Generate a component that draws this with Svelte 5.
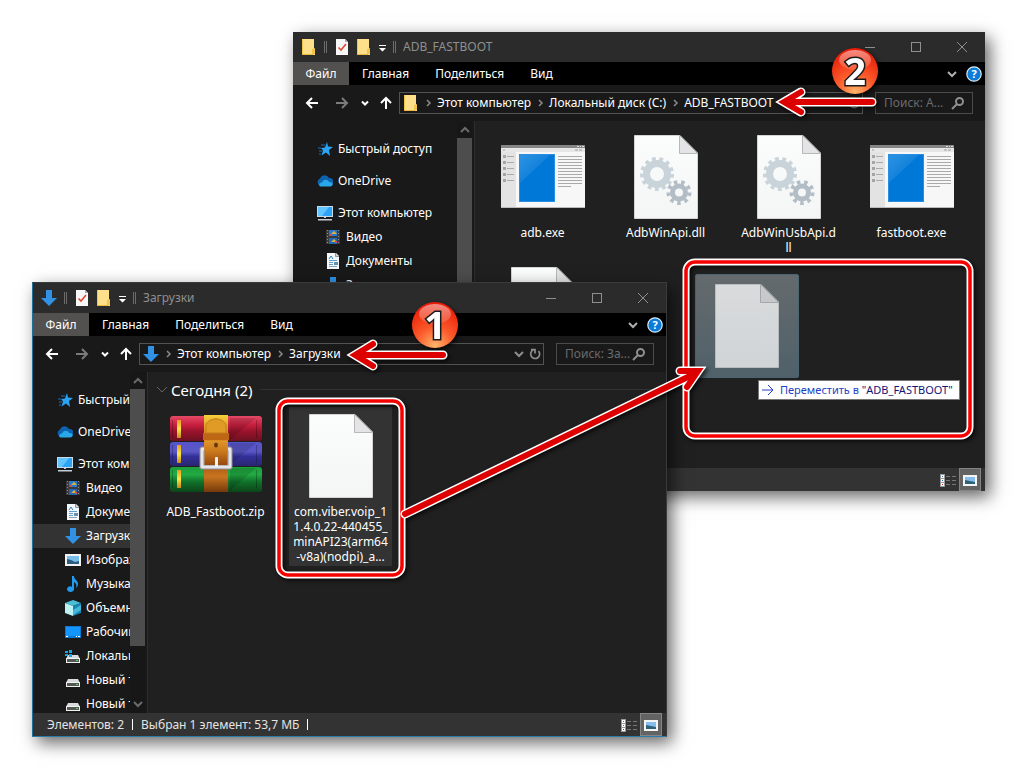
<script>
  const target = {
    id: 'target',
    title: 'ADB_FASTBOOT',
    icon: 'folder',
    path: ['Этот компьютер', 'Локальный диск (C:)', 'ADB_FASTBOOT'],
    search: 'Поиск: A...',
    places: [
      { icon: 'star', name: 'Быстрый доступ', root: true, spaced: true },
      { icon: 'cloud', name: 'OneDrive', root: true, spaced: true },
      { icon: 'pc', name: 'Этот компьютер', root: true },
      { icon: 'video', name: 'Видео' },
      { icon: 'docs', name: 'Документы' },
      { icon: 'down', name: 'Загрузки' }
    ],
    files: [
      { icon: 'exe', name: 'adb.exe' },
      { icon: 'dll', name: 'AdbWinApi.dll' },
      { icon: 'dll', name: 'AdbWinUsbApi.d\nll' },
      { icon: 'exe', name: 'fastboot.exe' },
      { icon: 'file', name: '' }
    ]
  };

  const source = {
    id: 'source',
    title: 'Загрузки',
    icon: 'down',
    path: ['Этот компьютер', 'Загрузки'],
    search: 'Поиск: За...',
    group: 'Сегодня (2)',
    places: [
      { icon: 'star', name: 'Быстрый доступ', root: true, spaced: true },
      { icon: 'cloud', name: 'OneDrive', root: true, spaced: true },
      { icon: 'pc', name: 'Этот компьютер', root: true },
      { icon: 'video', name: 'Видео' },
      { icon: 'docs', name: 'Документы' },
      { icon: 'down', name: 'Загрузки', current: true },
      { icon: 'image', name: 'Изображения' },
      { icon: 'music', name: 'Музыка' },
      { icon: 'cube', name: 'Объемные объекты' },
      { icon: 'desktop', name: 'Рабочий стол' },
      { icon: 'sysdisk', name: 'Локальный диск (C:)' },
      { icon: 'disk', name: 'Новый том (D:)' },
      { icon: 'disk', name: 'Новый том (E:)' }
    ],
    files: [
      { icon: 'zip', name: 'ADB_Fastboot.zip' },
      { icon: 'file', name: 'com.viber.voip_1\n1.4.0.22-440455_\nminAPI23(arm64\n-v8a)(nodpi)_a...', selected: true }
    ],
    status: ['Элементов: 2', 'Выбран 1 элемент: 53,7 МБ']
  };

  const windows = [target, source];
  const menu = ['Файл', 'Главная', 'Поделиться', 'Вид'];
</script>

{#snippet icon(name)}
  <svg class="icon" width="16" height="16" viewBox="0 0 16 16" aria-hidden="true">
    {#if name === 'folder'}
      <path d="M1 0h12v11l1 1v4H1z" fill="#ffe08a" />
      <path d="M1 0h1v16h-1zM11 10l3-1v6l-3 1z" fill="#f0c54c" />
      <path d="M1 15h11v1H1z" fill="#e8b93c" />
    {:else if name === 'check'}
      <path d="M2 0h9l3 3v13H2z" fill="#f7f7f7" />
      <path d="M11 0l3 3h-3z" fill="#aaa" />
      <path d="M4.500 8.500l2.500 2.500 5-6" fill="none" stroke="#e2492f" stroke-width="1.600" />
    {:else if name === 'down'}
      <path d="M5 0h6v8h5l-8 8-8-8h5z" fill="#3191e4" />
    {:else if name === 'star'}
      <path d="M10 1l1 4.500 5 .500-4 3 1 6-4-3.500-4.500 3 1.500-5-2-2.500 4-.500z" fill="#2aa5f5" />
      <path d="M4 4h4M1 7h3M2 10h3M2 13h2" stroke="#1670b8" />
    {:else if name === 'cloud'}
      <path d="M4 13a4 4 0 0 1-1-7.600A5 5 0 0 1 12 5a4 4 0 0 1 1 8z" fill="#0f62ae" />
      <path d="M4 13.500c-3 0-2-4 1-4 2-4 6-3 7-.500 4-1 5 4.500 1 4.500z" fill="#28a8ea" />
    {:else if name === 'pc'}
      <rect y="1" width="16" height="11" fill="#c8dbe6" />
      <rect x="1" y="2" width="14" height="9" fill="#2ca3f4" />
      <path d="M1 2h11L5 11H1z" fill="#62c4ff" />
      <path d="M7 12h2v1H7zM1 14h14v1.500H1z" fill="#c5cdd8" />
    {:else if name === 'video'}
      <rect x="1" y="1" width="14" height="14" fill="#3a3a3a" />
      <path d="M2.500 1v14M13.500 1v14" stroke="#909090" stroke-dasharray="1 2" />
      <rect x="4" y="1" width="8" height="6" fill="#2879ce" />
      <rect x="4" y="9" width="8" height="6" fill="#2667b5" />
      <path d="M6 5l3-3 3 3zM6 13l3-3 3 3z" fill="#e0b335" />
      <path d="M5 5h2v2H5zM10 12h2v2h-2z" fill="#cf4b62" />
    {:else if name === 'docs'}
      <path d="M2 0h9l3 3v13H2z" fill="#f4f7f9" />
      <path d="M10.500 0v3.500H14" fill="#ccd4d9" stroke="#8b969e" />
      <path d="M4 6l2-3 2 3" fill="none" stroke="#2a7ec0" />
      <path d="M4 7.500h8M4 9.500h4M4 11.500h4" stroke="#5ba0d2" />
      <path d="M4 13.500h8" stroke="#8fa3b0" />
      <path d="M9 9h4v3H9z" fill="#6a91ab" />
    {:else if name === 'image'}
      <rect y="2" width="16" height="12" fill="#f2f2f2" />
      <rect x="2" y="4" width="12" height="8" fill="#79bdea" />
      <path d="M2 7l4 1 4 2 4-1v3H2z" fill="#285c80" />
    {:else if name === 'music'}
      <path d="M7 0h2c0 4 4 4 4 8 0 2-1 3-2 4 1-3 0-5-2-6v7c0 4-7 4-7 0 0-2 3-4 5-2z" fill="#1f9bf0" />
    {:else if name === 'cube'}
      <path d="M0 3l8-3 8 3-8 3z" fill="#48bed8" />
      <path d="M0 3l8 3v10l-8-3z" fill="#bdf1f2" />
      <path d="M16 3L8 6v10l8-3z" fill="#1686b4" />
      <path d="M8 10l8-5v5l-8 5z" fill="#45b9d7" />
    {:else if name === 'desktop'}
      <rect y="2" width="16" height="12" fill="#0d78d0" />
      <rect x="1" y="3" width="14" height="9" fill="#1595ff" />
      <path d="M1 12.500h2M11 12.500h1M13 12.500h2" stroke="#fff" />
    {:else if name === 'sysdisk' || name === 'disk'}
      <path d="M3 7h10l2 4H1z" fill="#d9dcdc" />
      <rect x="1" y="10" width="14" height="5" fill="#f0f0f0" />
      <rect x="2" y="11" width="12" height="3" fill="#565656" />
      <rect x="11" y="12" width="2" height="1" fill="#3be545" />
      {#if name === 'sysdisk'}
        <path d="M0 3h3v2H0zM4 2h3v3H4zM0 6h3v2H0zM4 6h3v3H4z" fill="#16a5ed" />
      {/if}
    {:else if name === 'back'}
      <path d="M14 8H3M8 3L3 8l5 5" fill="none" stroke="currentColor" stroke-width="2" />
    {:else if name === 'forward'}
      <path d="M2 8h11M8 3l5 5-5 5" fill="none" stroke="currentColor" stroke-width="2" />
    {:else if name === 'up'}
      <path d="M8 14V3M3 8l5-5 5 5" fill="none" stroke="currentColor" stroke-width="2" />
    {:else if name === 'chevron'}
      <path d="M4 6l4 4 4-4" fill="none" stroke="currentColor" stroke-width="2" />
    {:else if name === 'small-chevron'}
      <path d="M5 6.500L8 9.500l3-3" fill="none" stroke="currentColor" stroke-width="2" />
    {:else if name === 'right'}
      <path d="M8 5l3 3-3 3" fill="none" stroke="currentColor" stroke-width="1.500" />
    {:else if name === 'refresh'}
      <path d="M11.500 5a4.500 4.500 0 1 1-5-1.200M4 3.500h4v4" fill="none" stroke="currentColor" stroke-width="1.700" />
    {:else if name === 'search'}
      <circle cx="9.500" cy="6.500" r="3.500" fill="none" stroke="currentColor" stroke-width="2" />
      <path d="M7 9l-5 5" stroke="currentColor" stroke-width="2" />
    {:else if name === 'caret'}
      <path d="M5 6h7v1H5zM5 9h7l-3.500 3.500z" fill="#fff" />
    {:else if name === 'minimize'}
      <path d="M3 8.500h10" stroke="currentColor" />
    {:else if name === 'maximize'}
      <rect x="3.500" y="3.500" width="9" height="9" fill="none" stroke="currentColor" />
    {:else if name === 'close'}
      <path d="M3 3l10 10M13 3L3 13" stroke="currentColor" />
    {:else if name === 'help'}
      <circle cx="8" cy="8" r="7.200" fill="#0b7bd8" stroke="#dcecf8" stroke-width="1.200" />
      <text x="8" y="12" text-anchor="middle" font-size="11" font-weight="700" fill="#fff">?</text>
    {:else if name === 'details'}
      <rect y="2" width="5" height="13" fill="#9a9a9a" />
      <path d="M1 3h3v3H1zM1 7h3v3H1zM1 11h3v3H1z" fill="#fff" />
      <path d="M2 4h1v1H2zM2 8h1v1H2z" fill="#2877c0" />
      <path d="M2 12h1v1H2z" fill="#c02b2b" />
      <path d="M6 4.500h4M6 8.500h4M6 12.500h4M12 4.500h4M12 8.500h4M12 12.500h4" stroke="#777" />
    {:else if name === 'large'}
      <rect x="1" y="3" width="14" height="11" fill="#f4f4f4" />
      <rect x="3" y="5" width="10" height="7" fill="#86bdec" />
      <path d="M3 8l5 1 5 1v2H3z" fill="#2f6278" />
    {/if}
  </svg>
{/snippet}

{#snippet page(gears)}
  <svg width="64" height="84" viewBox="0 0 64 84" aria-hidden="true">
    <path d="M.5.5H46L63.500 18v65.500H.5z" fill="url(#paper)" stroke="#d4d4d4" />
    <path d="M45.500.5V18.500H63.500z" fill="#e4e4e6" stroke="#b8b8b8" />
    {#if gears}
      <g fill="none">
        <circle cx="23" cy="39" r="10.500" stroke="#c9d3da" stroke-width="7" />
        <circle cx="23" cy="39" r="15" stroke="#c9d3da" stroke-width="4" stroke-dasharray="3.700 3.554" />
        <circle cx="45" cy="57.500" r="6.500" stroke="#b2bdc5" stroke-width="5" />
        <circle cx="45" cy="57.500" r="10.500" stroke="#b2bdc5" stroke-width="4" stroke-dasharray="3.500 3.830" />
      </g>
    {/if}
  </svg>
{/snippet}

{#snippet program()}
  <svg width="84" height="64" viewBox="0 0 84 64" aria-hidden="true">
    <rect width="84" height="63" fill="#f7f7f7" />
    <rect width="84" height="3" fill="#858585" />
    <path d="M76 1h2v1h-2zM79 1h1v1h-1zM81 1h2v1h-2z" fill="#ddd" />
    <rect y="3" width="84" height="4" fill="#e6e6e6" />
    <path d="M2 4h2v2H2zM74 4h3v2h-3zM78 4h3v2h-3z" fill="#c2c2c2" />
    <rect y="7" width="15" height="55" fill="#e3e3e3" />
    {#each [10, 16, 22, 28, 34] as y}
      <rect x="2" {y} width="3" height="3" fill="#a5a5a5" />
      <rect x="6" y={y + 1} width="7" height="1" fill="#aaa" />
    {/each}
    <rect x="18" y="9" width="36" height="48" fill="#2a8ee2" />
    <rect x="19" y="10" width="34" height="46" fill="#0078d7" />
    <path d="M19 10h30L19 38z" fill="url(#screen)" />
    {#each [11, 14, 17, 20, 23, 26, 29, 32, 35, 38] as y}
      <rect x="57" {y} width="24" height="1" fill="#a9a9a9" />
    {/each}
    <rect x="57" y="41" width="13" height="1" fill="#a9a9a9" />
    <path d="M0 62h84v1H0z" fill="#bbb" />
  </svg>
{/snippet}

{#snippet archive()}
  <svg width="92" height="84" viewBox="0 -1 92 84" aria-hidden="true">
    <rect y="1" width="92" height="25" rx="3" fill="url(#red-book)" />
    <rect y="27" width="92" height="24" rx="3" fill="url(#blue-book)" />
    <rect y="52" width="92" height="25" rx="3" fill="url(#green-book)" />
    {#each [5, 30, 55] as y}
      <rect x="7" {y} width="4" height="18" fill="url(#gold)" />
      <path d="M86.500 {y}v18M2.500 {y}v18" stroke="#000" opacity=".25" />
    {/each}
    <path d="M60 3h26L60 25zM60 28h26L60 50zM60 53h26L60 76z" fill="#000" opacity=".12" />
    <rect x="34" width="24" height="77" fill="url(#belt)" />
    <path d="M33 18h26v7H33z" fill="#bd6716" />
    <path d="M36 9c5-7 15-7 20 0v9H36z" fill="#e09a26" stroke="#c37f1d" />
    <path d="M34 34h-2v18h28V34h-2" fill="none" stroke="#8d8d96" stroke-width="5" stroke-linejoin="round" />
    <path d="M34 34h-2v18h28V34h-2" fill="none" stroke="#e6e6ea" stroke-width="3" stroke-linejoin="round" />
    <rect x="35" y="26" width="22" height="24" fill="url(#strap)" />
    <rect x="45" y="42" width="3" height="10" rx="1" fill="#f2f2f5" />
    <ellipse cx="46" cy="30" rx="2" ry="2.500" fill="#68370c" />
  </svg>
{/snippet}

{#snippet grip()}
  <svg class="grip" width="5" height="14" viewBox="0 0 5 14" aria-hidden="true">
    <path d="M1.500 1v12M3.500 1v12" stroke="#6c6c6c" />
  </svg>
{/snippet}

<svg class="defs" width="0" height="0" aria-hidden="true">
  <defs>
    <linearGradient id="paper" x2="0" y2="1"><stop stop-color="#fbfcfc" /><stop offset="1" stop-color="#f4f5f5" /></linearGradient>
    <linearGradient id="screen" x2=".6" y2=".6"><stop stop-color="#2d93e2" /><stop offset="1" stop-color="#0f7fda" /></linearGradient>
    <linearGradient id="red-book" x2="0" y2="1"><stop stop-color="#e44a66" /><stop offset=".35" stop-color="#c9203f" /><stop offset=".6" stop-color="#9b142c" /><stop offset="1" stop-color="#6d1020" /></linearGradient>
    <linearGradient id="blue-book" x2="0" y2="1"><stop stop-color="#5554ca" /><stop offset=".4" stop-color="#5a57c4" /><stop offset=".6" stop-color="#34309a" /><stop offset="1" stop-color="#292570" /></linearGradient>
    <linearGradient id="green-book" x2="0" y2="1"><stop stop-color="#1c9e3c" /><stop offset=".3" stop-color="#22aa43" /><stop offset=".6" stop-color="#107029" /><stop offset="1" stop-color="#0c451a" /></linearGradient>
    <linearGradient id="gold" x2="0" y2="1"><stop stop-color="#e59b28" /><stop offset=".5" stop-color="#fbe842" /><stop offset="1" stop-color="#c7861d" /></linearGradient>
    <linearGradient id="belt" x2="0" y2="1"><stop stop-color="#f5d13c" /><stop offset=".2" stop-color="#dc941f" /><stop offset=".45" stop-color="#d98521" /><stop offset=".7" stop-color="#b56218" /><stop offset=".8" stop-color="#c8741f" /><stop offset="1" stop-color="#75390b" /></linearGradient>
    <linearGradient id="strap" x2="0" y2="1"><stop stop-color="#e0952a" /><stop offset=".4" stop-color="#cd7b1d" /><stop offset="1" stop-color="#97490f" /></linearGradient>
    <radialGradient id="ball" cx=".5" cy=".95" r=".9"><stop stop-color="#ffb56b" /><stop offset=".45" stop-color="#fb5a2b" /><stop offset="1" stop-color="#e81c06" /></radialGradient>
    <linearGradient id="gloss" x2="0" y2="1"><stop stop-color="#fff" stop-opacity=".5" /><stop offset="1" stop-color="#fff" stop-opacity=".1" /></linearGradient>
  </defs>
</svg>

<main class="desktop">
  {#each windows as win}
    <section class="window {win.id}">
      <header class="titlebar">
        {@render icon(win.icon)}
        {@render grip()}
        {@render icon('check')}
        {@render icon('folder')}
        <span class="customize">{@render icon('caret')}</span>
        {@render grip()}
        <span class="title">{win.title}</span>
        <div class="controls">
          <button aria-label="Свернуть">{@render icon('minimize')}</button>
          <button aria-label="Развернуть">{@render icon('maximize')}</button>
          <button aria-label="Закрыть">{@render icon('close')}</button>
        </div>
      </header>

      <div class="menu">
        {#each menu as item, i}
          <button class:primary={i === 0}>{item}</button>
        {/each}
        <div class="menu-end">
          <button class="dim" aria-label="Лента">{@render icon('chevron')}</button>
          <button aria-label="Справка">{@render icon('help')}</button>
        </div>
      </div>

      <div class="navbar">
        <button class="step" aria-label="Назад">{@render icon('back')}</button>
        <button class="step muted" aria-label="Вперед">{@render icon('forward')}</button>
        <button class="recent" aria-label="Последние">{@render icon('small-chevron')}</button>
        <button class="parent" aria-label="Вверх">{@render icon('up')}</button>
        <div class="address">
          {@render icon(win.icon)}
          {#each win.path as part}
            <span class="sep">{@render icon('right')}</span>
            <a href="#{win.id}">{part}</a>
          {/each}
          <div class="address-end">
            <button aria-label="История">{@render icon('chevron')}</button>
            <button aria-label="Обновить">{@render icon('refresh')}</button>
          </div>
        </div>
        <label class="search">
          <input type="text" placeholder={win.search} aria-label="Поиск" />
          {@render icon('search')}
        </label>
      </div>

      <div class="body">
        <nav class="places">
          {#each win.places as place}
            <a href="#{win.id}" class:root={place.root} class:spaced={place.spaced} class:current={place.current}>
              {@render icon(place.icon)}
              <span>{place.name}</span>
            </a>
          {/each}
        </nav>
        <div class="scrollbar">
          <span class="arrow flip">{@render icon('chevron')}</span>
          <span class="thumb"></span>
          <span class="arrow">{@render icon('chevron')}</span>
        </div>
        <div class="content">
          {#if win.group}
            <h2>
              <svg width="12" height="12" viewBox="0 0 12 12" aria-hidden="true"><path d="M1 3l5 5 5-5" fill="none" stroke="#666" /></svg>
              {win.group}
            </h2>
          {/if}
          <div class="files">
            {#each win.files as file}
              <button class="file" class:selected={file.selected}>
                <span class="picture">
                  {#if file.icon === 'exe'}
                    {@render program()}
                  {:else if file.icon === 'zip'}
                    {@render archive()}
                  {:else}
                    {@render page(file.icon === 'dll')}
                  {/if}
                </span>
                <span class="name">{file.name}</span>
              </button>
            {/each}
          </div>
        </div>
      </div>

      <footer class="status">
        {#each win.status ?? [] as text}
          <span class="info">{text}</span>
        {/each}
        <div class="views">
          <button aria-label="Таблица">{@render icon('details')}</button>
          <button class="on" aria-label="Крупные значки">{@render icon('large')}</button>
        </div>
      </footer>
    </section>
  {/each}

  <div class="ghost">{@render page(false)}</div>
  <div class="tip">
    <svg width="14" height="14" viewBox="0 0 14 14" aria-hidden="true"><path d="M1 7h11M7 2l5 5-5 5" fill="none" stroke="#2340c8" /></svg>
    <span>Переместить в <b>"ADB_FASTBOOT"</b></span>
  </div>

  <svg class="marks" aria-hidden="true">
    <g fill="none">
      {#each [[279, 401, 123, 174], [686, 262, 284, 174]] as [x, y, width, height]}
        <rect {x} {y} {width} {height} rx="9" stroke="#fff" stroke-width="7" />
        <rect {x} {y} {width} {height} rx="9" stroke="#f60000" stroke-width="3.500" />
      {/each}
      {#each ['M872 102H788M801 92L784 102L801 112', 'M443 355H359M373 344L355 355L373 366', 'M405 514L692 375M680 371L698 371L687 387'] as d}
        <path {d} stroke="#fff" stroke-width="9" stroke-linecap="round" />
        <path {d} stroke="#dc0000" stroke-width="6" stroke-linecap="round" />
      {/each}
    </g>
    {#each [[435, 325, 1], [855, 71, 2]] as [x, y, n]}
      <circle cx={x} cy={y} r="23" fill="url(#ball)" />
      <ellipse cx={x} cy={y - 11} rx="16" ry="10" fill="url(#gloss)" />
      <text {x} y={y + 14} text-anchor="middle">{n}</text>
    {/each}
  </svg>
</main>

<style>
  :global(body) {
    margin: 0;
    background: #fff;
  }
  .desktop {
    position: relative;
    min-height: 100vh;
    overflow: hidden;
    color: #fff;
    font: 12px/16px "Noto Sans", "Open Sans", sans-serif;
  }
  .defs { position: absolute; }
  svg { display: block; flex: none; }
  button {
    padding: 0;
    border: 0;
    background: none;
    color: inherit;
    font: inherit;
  }
  a { color: inherit; text-decoration: none; }

  .window {
    position: absolute;
    box-sizing: border-box;
    display: flex;
    flex-direction: column;
    background: #191919;
    box-shadow: 5px 6px 16px rgba(0, 0, 0, 0.6);
  }
  .target {
    left: 293px;
    top: 32px;
    width: 692px;
    height: 459px;
  }
  .source {
    left: 32px;
    top: 282px;
    width: 635px;
    height: 455px;
    border: 1px solid #3b3b3b;
    border-left-color: #216f96;
    border-bottom-color: #2a7ba8;
  }

  .titlebar {
    display: flex;
    align-items: center;
    gap: 6px;
    height: 30px;
    padding-left: 8px;
    background: #2b2b2b;
    color: #8f8f8f;
  }
  .customize { width: 8px; }
  .customize .icon { margin-left: -4px; }
  .title { flex: 1; }
  .controls { display: flex; }
  .controls button {
    display: grid;
    place-items: center;
    width: 46px;
    height: 30px;
  }

  .menu {
    display: flex;
    height: 23px;
    background: #000;
  }
  .menu > button { padding: 0 13px; }
  .menu > .primary { width: 56px; padding: 0; background: #535150; }
  .menu-end {
    display: flex;
    align-items: center;
    gap: 6px;
    margin-left: auto;
    padding-right: 3px;
  }
  .dim { color: #b0b0b0; }

  .navbar {
    display: flex;
    align-items: center;
    height: 36px;
    padding: 0 12px 0 4px;
  }
  .navbar > button { display: grid; place-items: center; }
  .step { width: 30px; }
  .muted { color: #7b7b7b; }
  .recent { width: 16px; }
  .parent { width: 26px; }
  .address {
    display: flex;
    flex: 1;
    align-items: center;
    box-sizing: border-box;
    height: 22px;
    padding-left: 3px;
    border: 1px solid #535353;
  }
  .sep {
    width: 18px;
    color: #8a8a8a;
  }
  .address-end {
    display: flex;
    align-items: center;
    margin-left: auto;
    color: #8f8f8f;
  }
  .search {
    display: flex;
    align-items: center;
    box-sizing: border-box;
    width: 98px;
    height: 22px;
    margin-left: 12px;
    padding: 0 6px 0 8px;
    border: 1px solid #4b4b4b;
    color: #8f8f8f;
  }
  .search input {
    flex: 1;
    min-width: 0;
    padding: 0;
    border: 0;
    outline: 0;
    background: none;
    color: #fff;
    font: inherit;
  }
  .search input::placeholder { color: #6b6b6b; opacity: 1; }

  .body {
    display: flex;
    flex: 1;
    min-height: 0;
  }
  .places {
    width: 97px;
    padding-top: 16px;
    overflow: hidden;
  }
  .target .places { width: 164px; }
  .places a {
    display: flex;
    align-items: center;
    gap: 5px;
    height: 24px;
    padding-left: 32px;
    white-space: nowrap;
  }
  .places .root { padding-left: 24px; }
  .places .spaced { margin-bottom: 8px; }
  .places .current { background: #333; }
  .scrollbar {
    display: flex;
    flex-direction: column;
    width: 15px;
    margin-right: 2px;
    background: #171717;
    color: #6b6b6b;
  }
  .arrow { height: 17px; overflow: hidden; }
  .flip { transform: scaleY(-1); }
  .thumb { flex: 1; background: #4d4d4d; }
  .source .thumb { flex: none; height: 257px; }
  .source .arrow:last-child { margin-top: auto; }

  .content {
    flex: 1;
    min-width: 0;
    border-left: 1px solid #2d2d2d;
    background: #202020;
  }
  h2 {
    display: flex;
    align-items: center;
    gap: 3px;
    height: 35px;
    margin: 0;
    padding: 0 10px 0 8px;
    font-size: 15px;
    font-weight: 400;
  }
  h2::after {
    content: "";
    flex: 1;
    height: 1px;
    margin-left: 4px;
    background: #323232;
  }
  .files {
    display: grid;
    grid-template-columns: repeat(auto-fill, 103px);
    gap: 3px 20px;
    padding-left: 16px;
  }
  .target .files { padding-top: 7px; }
  .source .files { column-gap: 22px; }
  .file {
    display: flex;
    flex-direction: column;
    align-items: center;
    gap: 6px;
    padding: 7px 0 2px;
    line-height: 15px;
  }
  .file.selected { background: #333; }
  .picture {
    display: grid;
    place-items: center;
    height: 84px;
  }
  .name { white-space: pre; }
  .target .name { min-height: 30px; }

  .status {
    display: flex;
    align-items: center;
    height: 23px;
    padding: 0 4px 0 14px;
    background: #333;
  }
  .info {
    display: flex;
    align-items: center;
    margin-right: 8px;
    color: #e4e4e4;
  }
  .info::after {
    content: "";
    width: 1px;
    height: 11px;
    margin-left: 8px;
    background: #fff;
  }
  .views { display: flex; margin-left: auto; }
  .views button {
    display: grid;
    place-items: center;
    box-sizing: border-box;
    width: 22px;
    height: 23px;
  }
  .views .on { border: 1px solid #858585; background: #636363; }

  .ghost {
    position: absolute;
    left: 695px;
    top: 274px;
    display: grid;
    place-items: center;
    box-sizing: border-box;
    width: 104px;
    height: 104px;
    border: 1px solid #4c6470;
    border-radius: 2px;
    background: linear-gradient(#646a6d, #50616a);
  }
  .ghost :global(svg) { opacity: 0.78; }
  .tip {
    position: absolute;
    left: 758px;
    top: 380px;
    display: flex;
    align-items: center;
    gap: 5px;
    box-sizing: border-box;
    height: 20px;
    padding: 0 6px 0 2px;
    border: 1px solid #767676;
    background: #fff;
    color: #1f3fc4;
    font-size: 11px;
    white-space: nowrap;
  }
  .tip b { color: #141478; font-weight: 400; }

  .marks {
    position: absolute;
    top: 0;
    left: 0;
    width: 100%;
    height: 100%;
    pointer-events: none;
    filter: drop-shadow(2px 2px 2px rgba(0, 0, 0, 0.7));
  }
  .marks text {
    fill: #fff;
    stroke: #1b1b1b;
    stroke-width: 3px;
    paint-order: stroke;
    font-size: 38px;
    font-weight: 700;
  }
</style>
